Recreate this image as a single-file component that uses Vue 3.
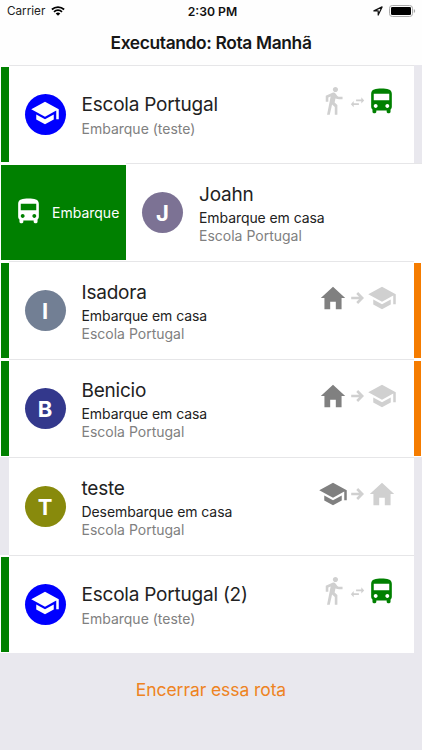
<script setup>
const icons = {
  bus: 'M4 16c0 .88.39 1.67 1 2.22V20c0 .55.45 1 1 1h1c.55 0 1-.45 1-1v-1h8v1c0 .55.45 1 1 1h1c.55 0 1-.45 1-1v-1.78c.61-.55 1-1.34 1-2.22V6c0-3.5-3.58-4-8-4s-8 .5-8 4v10zm3.5 1c-.83 0-1.5-.67-1.5-1.5S6.67 14 7.5 14s1.5.67 1.5 1.5S8.33 17 7.5 17zm9 0c-.83 0-1.5-.67-1.5-1.5s.67-1.5 1.5-1.5 1.5.67 1.5 1.5-.67 1.5-1.5 1.5zm1.5-6H6V6h12v5z',
  walk: 'M13.5 5.5c1.1 0 2-.9 2-2s-.9-2-2-2-2 .9-2 2 .9 2 2 2zM9.8 8.9L7 23h2.1l1.8-8 2.1 2v6h2v-7.5l-2.1-2 .6-3C14.6 10.8 15.6 11 16.4 11H19V9h-3c-.6 0-.9-.2-1.3-.8l-1-1.4c-.4-.6-1-.9-1.7-.9-.3 0-.5.1-.8.1L6 8.3V13h2V9.6l1.8-.7z',
  school: 'M5 13.18v4L12 21l7-3.82v-4L12 17l-7-3.82zM12 3L1 9l11 6 9-4.91V17h2V9L12 3z',
  home: 'M9.75 21v-6h4.5v6h4.6v-9h2.9L12 3l-9.75 9h2.9v9z',
  swap: 'M6.6 10L2.6 14.4l4 4.4v-3.2H14v-2.4H6.6zM21.4 9l-4-4.4v3.2H10v2.4h7.4v3.2z',
}

const rows = [
  { type: 'school', name: 'Escola Portugal', note: 'Embarque (teste)', left: true },
  { type: 'person', name: 'Joahn', letter: 'J', tone: 'mauve', action: 'Embarque em casa', open: true },
  { type: 'person', name: 'Isadora', letter: 'I', tone: 'slate', action: 'Embarque em casa', left: true, right: true, from: 'home', to: 'school' },
  { type: 'person', name: 'Benicio', letter: 'B', tone: 'navy', action: 'Embarque em casa', left: true, right: true, from: 'home', to: 'school' },
  { type: 'person', name: 'teste', letter: 'T', tone: 'olive', action: 'Desembarque em casa', from: 'school', to: 'home' },
  { type: 'school', name: 'Escola Portugal (2)', note: 'Embarque (teste)', left: true },
]
</script>

<template>
  <div class="screen">
    <header class="top">
      <div class="status">
        <div class="carrier">
          <span>Carrier</span>
          <svg class="wifi" viewBox="0 0 14 10">
            <path d="M.9 3.5a8.8 8.8 0 0 1 12.2 0" />
            <path d="M3 5.8a5.8 5.8 0 0 1 8 0" />
            <path class="solid" d="M7 9.8 4.7 7.5a3.3 3.3 0 0 1 4.6 0z" />
          </svg>
        </div>
        <div class="clock">2:30 PM</div>
        <div class="power">
          <svg class="locate" viewBox="0 0 10 10"><path d="M.9 4.9 9.1.9 5.2 9.1V4.9z" /></svg>
          <svg class="battery" viewBox="0 0 27 12">
            <rect class="case" x=".5" y=".5" width="23" height="11" rx="2.8" />
            <rect x="2" y="2" width="20" height="8" rx="1.3" />
            <path class="tip" d="M24.8 4v4q1.4-.6 1.4-2t-1.4-2z" />
          </svg>
        </div>
      </div>
      <h1>Executando: Rota Manhã</h1>
    </header>

    <main>
      <section v-for="row in rows" :key="row.name" class="row" :class="[row.type, { open: row.open }]">
        <div v-if="row.open" class="swipe">
          <svg viewBox="0 0 24 24"><path :d="icons.bus" /></svg>
          <span>Embarque</span>
        </div>
        <div v-else class="edge" :class="{ green: row.left }"></div>

        <div class="card">
          <div class="avatar" :class="row.tone">
            <svg v-if="row.type === 'school'" viewBox="0 0 24 24"><path :d="icons.school" /></svg>
            <span v-else>{{ row.letter }}</span>
          </div>
          <div class="text">
            <div class="name">{{ row.name }}</div>
            <div v-if="row.action" class="action">{{ row.action }}</div>
            <div class="note">{{ row.note || 'Escola Portugal' }}</div>
          </div>
          <div v-if="row.type === 'school'" class="route">
            <svg class="big walk pale" viewBox="0 0 24 24"><path :d="icons.walk" /></svg>
            <svg class="swap" viewBox="0 0 24 24"><path :d="icons.swap" /></svg>
            <svg class="big bus" viewBox="0 0 24 24"><path :d="icons.bus" /></svg>
          </div>
          <div v-else-if="!row.open" class="route">
            <svg class="big dark" viewBox="0 0 24 24"><path :d="icons[row.from]" /></svg>
            <svg class="arrow" viewBox="0 0 13 12"><path d="M.2 6h11M6.2 1l5 5-5 5" /></svg>
            <svg class="big pale" viewBox="0 0 24 24"><path :d="icons[row.to]" /></svg>
          </div>
        </div>

        <div v-if="!row.open" class="edge end" :class="{ orange: row.right }"></div>
      </section>
      <button class="finish">Encerrar essa rota</button>
    </main>
  </div>
</template>

<style>
body {
  background: #e9e8ee;
}
</style>

<style scoped>
.screen {
  width: 422px;
  height: 750px;
  overflow: hidden;
  background: #e9e8ee;
  font-family: Inter, "Liberation Sans", sans-serif;
  color: #222;
}
svg {
  display: block;
  flex: none;
}
.top {
  height: 65px;
  background: #fefefe;
}
.status {
  display: grid;
  grid-template-columns: 1fr auto 1fr;
  align-items: center;
  height: 22px;
  padding: 0 6px 0 7px;
}
.carrier {
  display: flex;
  align-items: center;
  gap: 6px;
  font-size: 11.7px;
}
.wifi {
  width: 14px;
  height: 10px;
  fill: none;
  stroke: #000;
  stroke-width: 1.8;
}
.wifi .solid {
  fill: #000;
  stroke: none;
}
.clock {
  padding-left: 2px;
  font-size: 12.2px;
  font-weight: 600;
  color: #111;
}
.power {
  display: flex;
  justify-content: flex-end;
  align-items: center;
  gap: 6px;
}
.locate {
  width: 10px;
  height: 10px;
  fill: none;
  stroke: #111;
  stroke-width: 1.2;
  stroke-linejoin: round;
}
.battery {
  width: 27px;
  height: 12px;
}
.battery .case {
  fill: none;
  stroke: #aaa;
}
.battery .tip {
  fill: #aaa;
}
h1 {
  margin: 0;
  padding-top: 9px;
  text-align: center;
  font-size: 17.4px;
  line-height: 24px;
  font-weight: 600;
  letter-spacing: -0.36px;
  color: #161616;
}
.row {
  display: flex;
  box-sizing: border-box;
  height: 98px;
}
.edge {
  box-sizing: border-box;
  flex: none;
  width: 8.5px;
}
.green {
  padding: 2px 0 1px 1px;
  background: linear-gradient(#008000, #008000) content-box, #fff;
}
.orange {
  padding: 2px 1px 1px 0;
  background: linear-gradient(#f57c00, #f57c00) content-box, #fff;
}
.swipe {
  box-sizing: border-box;
  flex: none;
  display: flex;
  align-items: center;
  gap: 8px;
  width: 126px;
  padding: 2px 0 1px 1px;
  background: linear-gradient(#008000, #008000) content-box, #fff;
  color: #fff;
  font-size: 14px;
}
.swipe svg {
  width: 31px;
  height: 31px;
  margin: -2px 0 0 12px;
  fill: #fff;
}
.card {
  flex: 1;
  display: flex;
  align-items: center;
  box-sizing: border-box;
  min-width: 0;
  border-top: 1px solid #e6e6e8;
  background: #fff;
  padding-left: 16px;
}
.avatar {
  flex: none;
  display: flex;
  align-items: center;
  justify-content: center;
  width: 41px;
  height: 41px;
  border-radius: 50%;
  background: #0000ff;
  color: #fff;
  font-size: 22px;
  font-weight: 700;
}
.avatar svg {
  width: 30px;
  height: 30px;
  margin-top: -3px;
  fill: #fff;
}
.mauve { background: #7c7294; }
.slate { background: #727f94; }
.navy { background: #33388c; }
.olive { background: #888a0c; }
.text {
  flex: 1;
  padding-left: 16px;
  white-space: nowrap;
}
.name {
  padding-top: 1px;
  font-size: 19px;
  line-height: 26px;
  letter-spacing: -0.22px;
}
.action,
.note {
  font-size: 14px;
  line-height: 17.5px;
}
.action {
  padding-top: 1px;
  letter-spacing: -0.08px;
}
.note {
  color: #808080;
}
.school .name {
  padding-top: 0;
}
.school .note {
  padding-top: 2px;
}
.route {
  align-self: flex-start;
  display: flex;
  align-items: center;
  justify-content: space-between;
  width: 79px;
  padding: 20px 16.5px 0 0;
}
.person .route {
  padding-top: 21px;
}
.big {
  width: 30px;
  height: 30px;
}
.school .big {
  width: 31px;
  height: 31px;
}
.school .walk {
  margin-top: -2px;
}
.pale,
.swap {
  fill: #d0d0d0;
}
.dark {
  fill: #808080;
}
.bus {
  fill: #008000;
}
.swap {
  width: 17px;
  height: 17px;
  margin-top: 2px;
}
.arrow {
  width: 13px;
  height: 12px;
  fill: none;
  stroke: #d0d0d0;
  stroke-width: 2.6;
}
.finish {
  display: block;
  margin: 23px auto 0;
  padding: 0;
  border: 0;
  background: none;
  font: inherit;
  font-size: 17.5px;
  line-height: 28px;
  letter-spacing: -0.08px;
  color: #ee8322;
}
</style>
